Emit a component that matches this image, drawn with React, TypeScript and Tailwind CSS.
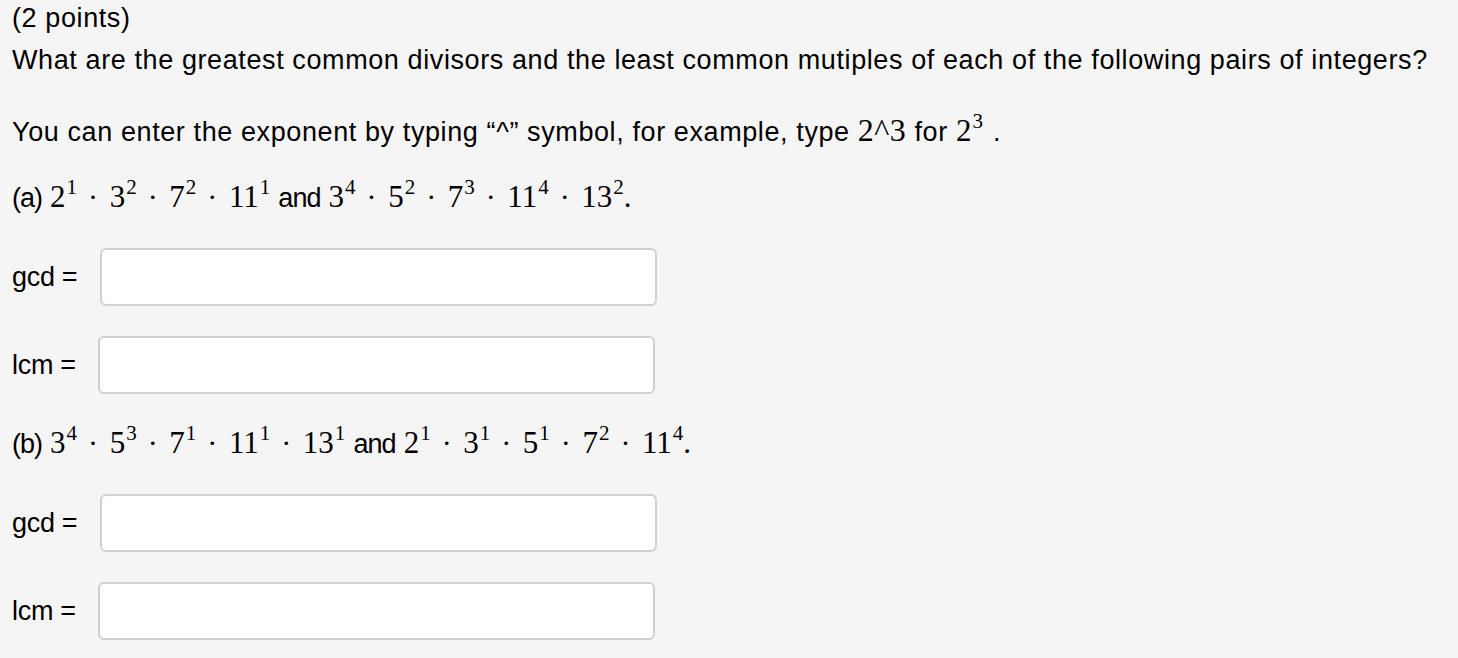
const serif = "font-['Liberation_Serif',serif]";

function Term({ b, e }: { b: string; e: string }) {
  return (
    <span className={`${serif} tracking-normal`}>
      <span className="text-[31px]">{b}</span>
      <sup className="text-[21px] -top-[13px] ml-[1px]">{e}</sup>
    </span>
  );
}

function Dot() {
  return <span className={`${serif} text-[30px] mx-[11px]`}>·</span>;
}

function Product({ terms }: { terms: [string, string][] }) {
  return (
    <>
      {terms.map(([b, e], i) => (
        <span key={i}>
          {i > 0 && <Dot />}
          <Term b={b} e={e} />
        </span>
      ))}
    </>
  );
}

function Field({ label, left }: { label: string; left: string }) {
  return (
    <div className="flex items-center h-[58px]">
      <span className="w-[88px] tracking-[-0.3px]">{label}</span>
      <input
        className={`h-[58px] w-[557px] bg-white border-2 border-[#d0d0d0] rounded-[6px] outline-none ${left}`}
      />
    </div>
  );
}

function Narrow({ children }: { children: React.ReactNode }) {
  return <span className="text-[27px] tracking-[-1px]">{children}</span>;
}

export default function App() {
  return (
    <div className="min-h-[658px] bg-[#f5f5f5] text-black font-['Liberation_Sans',Arial,sans-serif] text-[27px] tracking-[0.6px] px-[12px] pt-[2px]">
      <p className="leading-[32px]">(2 points)</p>
      <p className="leading-[32px] mt-[10px]">
        What are the greatest common divisors and the least common mutiples of each of the following pairs of integers?
      </p>
      <p className="leading-[40px] mt-[34px]">
        You can enter the exponent by typing “^” symbol, for example, type{' '}
        <span className={`${serif} text-[32px] tracking-[0.5px]`}>2^3</span> for <Term b="2" e="3" />{' '}
        <span className="ml-[2px]">.</span>
      </p>
      <p className="leading-[40px] mt-[25px]">
        <Narrow>(a)</Narrow> <Product terms={[['2', '1'], ['3', '2'], ['7', '2'], ['11', '1']]} />{' '}
        <Narrow>and</Narrow>{' '}
        <Product terms={[['3', '4'], ['5', '2'], ['7', '3'], ['11', '4'], ['13', '2']]} />
        <span className={`${serif} text-[31px]`}>.</span>
      </p>
      <div className="mt-[30px] flex flex-col gap-[30px]">
        <Field label="gcd =" left="" />
        <Field label="lcm =" left="-ml-[2px]" />
      </div>
      <p className="leading-[40px] mt-[29px]">
        <Narrow>(b)</Narrow> <Product terms={[['3', '4'], ['5', '3'], ['7', '1'], ['11', '1'], ['13', '1']]} />{' '}
        <Narrow>and</Narrow>{' '}
        <Product terms={[['2', '1'], ['3', '1'], ['5', '1'], ['7', '2'], ['11', '4']]} />
        <span className={`${serif} text-[31px]`}>.</span>
      </p>
      <div className="mt-[30px] flex flex-col gap-[30px]">
        <Field label="gcd =" left="" />
        <Field label="lcm =" left="-ml-[2px]" />
      </div>
    </div>
  );
}
